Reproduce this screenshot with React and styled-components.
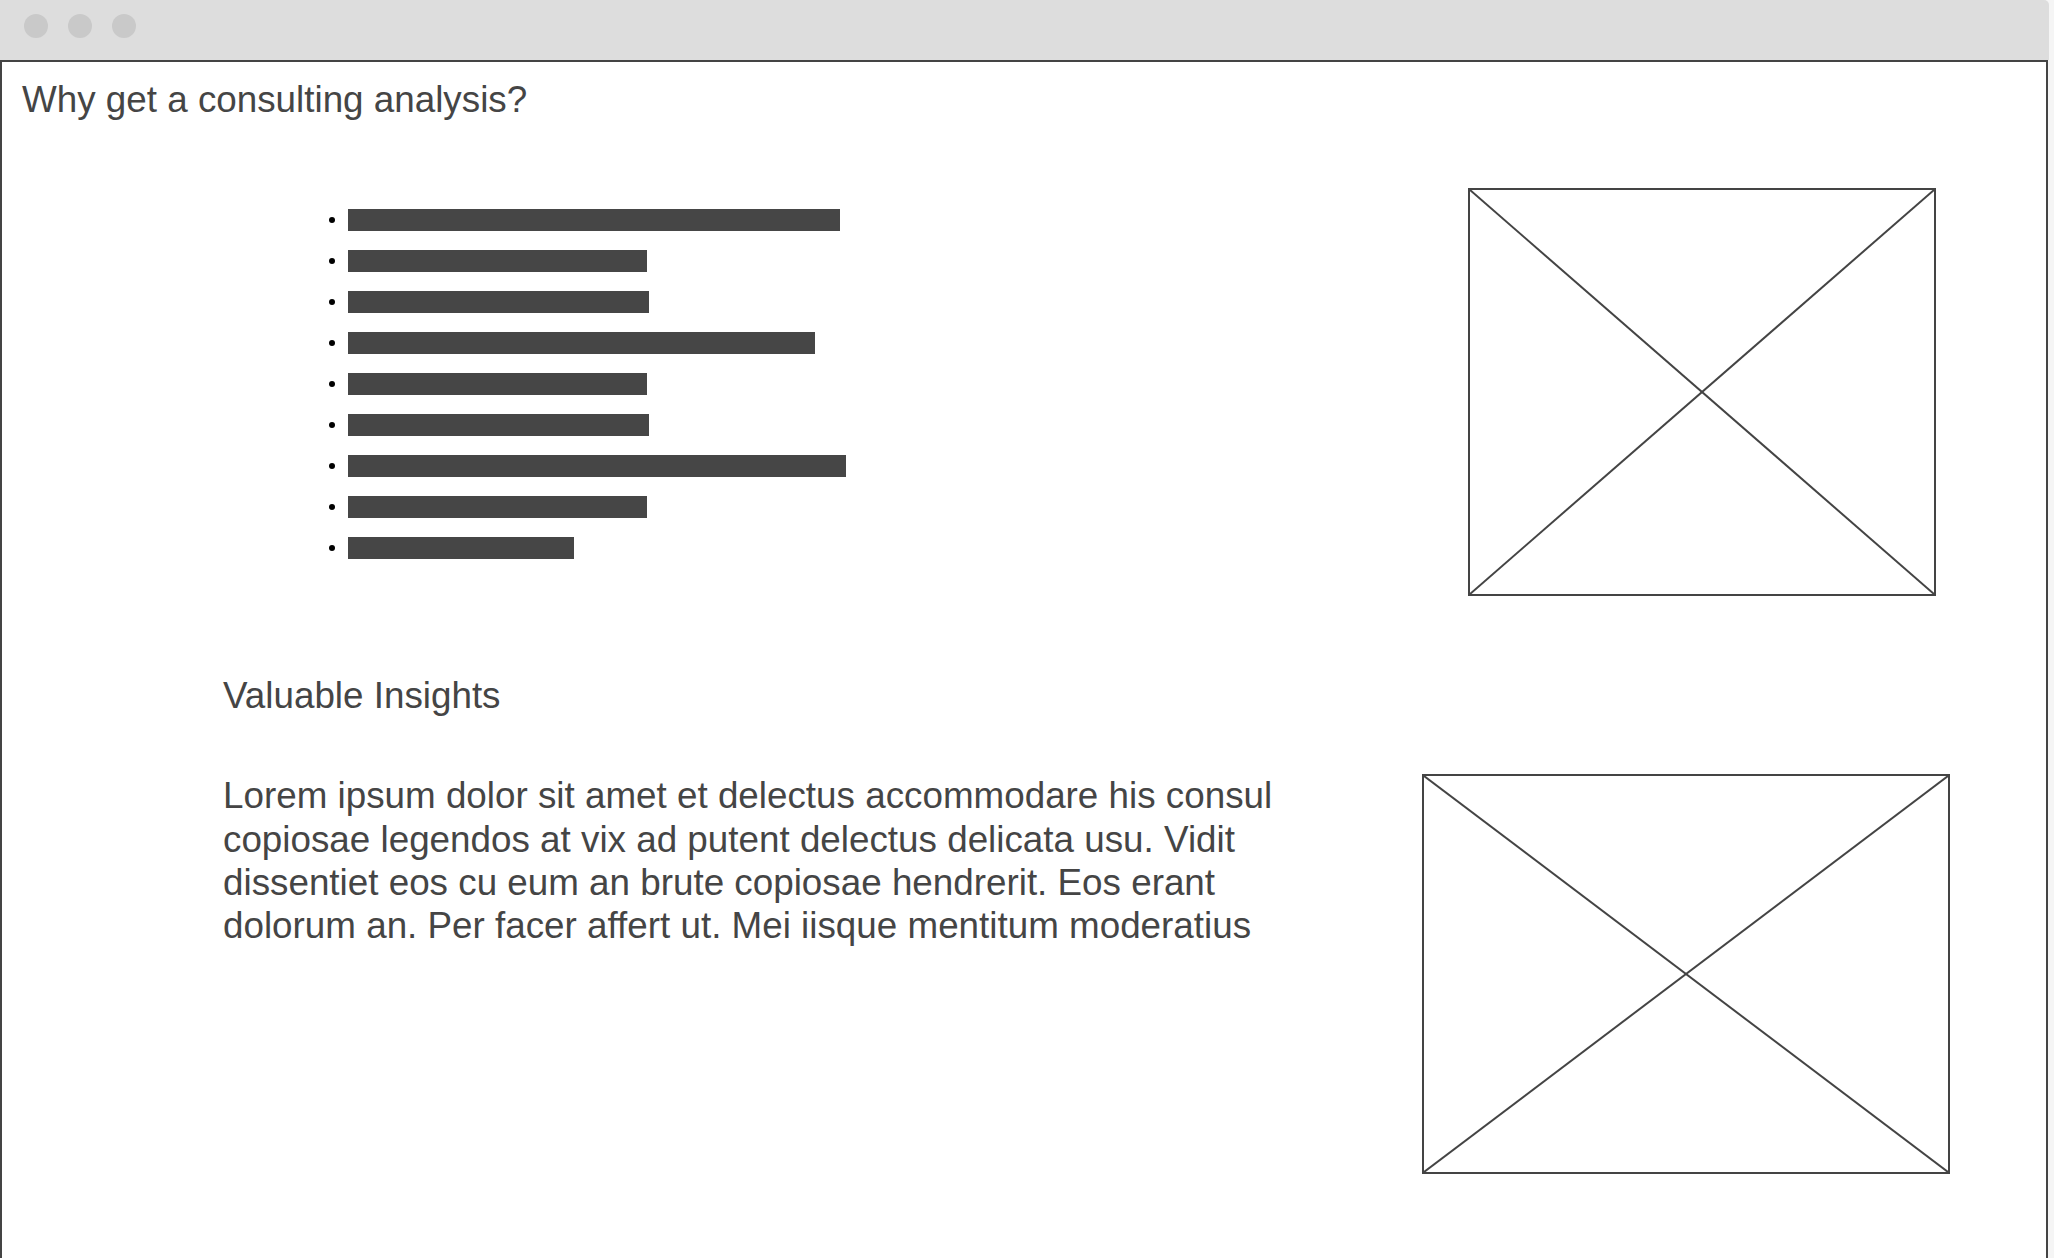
import React from "react";
import styled, { createGlobalStyle } from "styled-components";

const GlobalStyle = createGlobalStyle`
  html, body {
    margin: 0;
    padding: 0;
    background: #f5f5f5;
    overflow: hidden;
  }
  * { box-sizing: border-box; }
`;

const Window = styled.div`
  width: 2049px;
  height: 1258px;
  display: flex;
  flex-direction: column;
  font-family: "Liberation Sans", Arial, sans-serif;
  color: #454545;
`;

const TitleBar = styled.div`
  height: 60px;
  flex: none;
  background: #dddddd;
  border-top-right-radius: 5px;
  display: flex;
  align-items: flex-start;
  gap: 20px;
  padding: 14px 0 0 24px;
`;

const Dot = styled.span`
  width: 24px;
  height: 24px;
  border-radius: 50%;
  background: #c9c9c9;
`;

const Body = styled.div`
  flex: 1;
  width: 2048px;
  background: #ffffff;
  border: 2px solid #444444;
  border-bottom: none;
  display: flex;
  flex-direction: column;
  font-size: 36.8px;
  line-height: 43.2px;
`;

const Title = styled.h1`
  margin: 16px 0 0 20px;
  font-size: 36.8px;
  font-weight: normal;
  line-height: 43.2px;
`;

const Row = styled.section`
  display: flex;
  align-items: flex-start;
  margin-top: ${(p) => p.$top}px;
`;

const List = styled.ul`
  list-style: none;
  margin: 21px 0 0 327px;
  padding: 0;
  display: flex;
  flex-direction: column;
  gap: 19px;
`;

const Item = styled.li`
  display: flex;
  align-items: center;
  height: 22px;
  gap: 13px;
`;

const Bullet = styled.span`
  width: 6px;
  height: 6px;
  border-radius: 50%;
  background: #000;
  flex: none;
`;

const Bar = styled.span`
  height: 22px;
  background: #464646;
`;

const Placeholder = styled.div`
  flex: none;
  width: ${(p) => p.$w}px;
  height: ${(p) => p.$h}px;
  margin: 0 ${(p) => p.$mr}px 0 auto;
  border: 2px solid #444444;
  svg {
    display: block;
    width: 100%;
    height: 100%;
  }
`;

const Heading = styled.h2`
  margin: 78px 0 0 221px;
  font-size: 36.8px;
  font-weight: normal;
  line-height: 43.2px;
`;

const Paragraph = styled.p`
  margin: 0 0 0 221px;
  font-size: 36.8px;
  line-height: 43.2px;
  white-space: nowrap;
`;

const Cross = () => (
  <svg viewBox="0 0 100 100" preserveAspectRatio="none">
    <line x1="0" y1="0" x2="100" y2="100" stroke="#444" strokeWidth="2" vectorEffect="non-scaling-stroke" />
    <line x1="100" y1="0" x2="0" y2="100" stroke="#444" strokeWidth="2" vectorEffect="non-scaling-stroke" />
  </svg>
);

const bars = [492, 299, 301, 467, 299, 301, 498, 299, 226];

export default function App() {
  return (
    <>
      <GlobalStyle />
      <Window>
        <TitleBar>
          <Dot />
          <Dot />
          <Dot />
        </TitleBar>
        <Body>
          <Title>Why get a consulting analysis?</Title>
          <Row $top={67}>
            <List>
              {bars.map((w, i) => (
                <Item key={i}>
                  <Bullet />
                  <Bar style={{ width: w }} />
                </Item>
              ))}
            </List>
            <Placeholder $w={468} $h={408} $mr={110}>
              <Cross />
            </Placeholder>
          </Row>
          <Heading>Valuable Insights</Heading>
          <Row $top={57}>
            <Paragraph>
              Lorem ipsum dolor sit amet et delectus accommodare his consul
              <br />
              copiosae legendos at vix ad putent delectus delicata usu. Vidit
              <br />
              dissentiet eos cu eum an brute copiosae hendrerit. Eos erant
              <br />
              dolorum an. Per facer affert ut. Mei iisque mentitum moderatius
            </Paragraph>
            <Placeholder $w={528} $h={400} $mr={96}>
              <Cross />
            </Placeholder>
          </Row>
        </Body>
      </Window>
    </>
  );
}
